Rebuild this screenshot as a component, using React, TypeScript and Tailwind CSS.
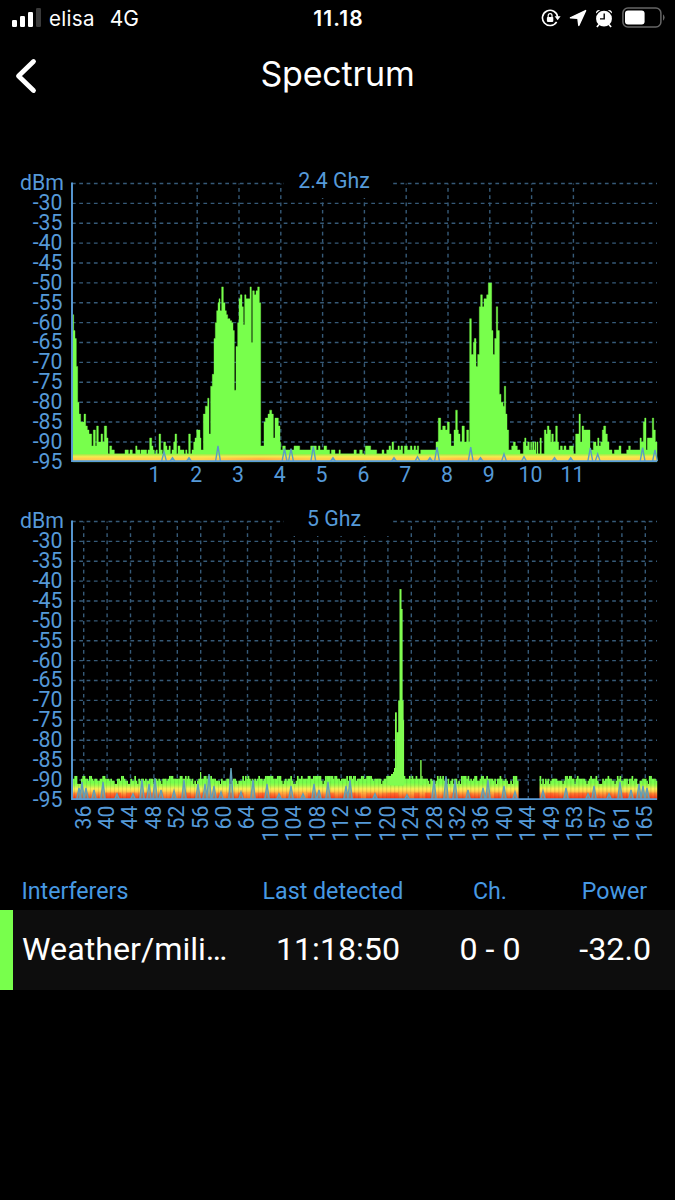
import React from 'react';

type Point = [number, number];

// Points are [offset, dBm]; offsets count thirds of a pixel from `at`
interface Segment {
    at: number;
    points: Point[];
}

interface Spike {
    x: number;
    dbm: number;
}

const PLOT_LEFT = 72;
const PLOT_RIGHT = 657;
const PLOT_TOP = 23.5;
const STEP = 19.88;
const PLOT_BOTTOM = PLOT_TOP + STEP * 14;

const LEVELS = [-30, -35, -40, -45, -50, -55, -60, -65, -70, -75, -80, -85, -90, -95];

const CHANNELS_24 = ['1', '2', '3', '4', '5', '6', '7', '8', '9', '10', '11'];
const CHANNELS_5 = [
    '36', '40', '44', '48', '52', '56', '60', '64', '100', '104', '108', '112', '116',
    '120', '124', '128', '132', '136', '140', '144', '149', '153', '157', '161', '165',
];

const SWEEP_24: Segment[] = [
    {
        at: 0,
        points: [
            [218, -58], [221, -62], [225, -64], [229, -71], [233, -80], [237, -83], [242, -85], [252, -83], [257, -86],
            [262, -87], [267, -88], [275, -91], [280, -87], [286, -91], [290, -86], [295, -90], [303, -88], [308, -90],
            [313, -86], [320, -89], [324, -93], [329, -91], [335, -92], [343, -93], [375, -92], [385, -93], [390, -92],
            [397, -93], [407, -91], [411, -92], [420, -93], [423, -92], [440, -93], [444, -92], [449, -89], [455, -91],
            [459, -92], [463, -93], [468, -92], [472, -93], [477, -88], [482, -92], [487, -93], [491, -90], [497, -91],
            [501, -92], [507, -91], [511, -93], [516, -92], [521, -90], [525, -88], [530, -93], [534, -91], [540, -92],
            [552, -93], [557, -92], [561, -93], [566, -88], [571, -93], [576, -92], [581, -90], [585, -89], [590, -87],
            [600, -89], [603, -92],
        ],
    },
    {
        at: 190,
        points: [
            [40, -83], [46, -81], [53, -79], [57, -88], [62, -76], [67, -73], [72, -64], [76, -60], [80, -57], [84, -55],
            [87, -54], [90, -57], [95, -51], [100, -55], [105, -57], [109, -58], [113, -59], [120, -59.5], [125, -60],
            [129, -62], [133, -77], [138, -66], [143, -60], [147, -54], [151, -53], [156, -56], [160, -60.5], [164, -53],
            [168, -54], [180, -51], [184, -65], [188, -52], [193, -53], [198, -52], [203, -51], [208, -55], [212, -91],
            [222, -85], [226, -84], [234, -83], [239, -82], [245, -83], [250, -89], [255, -84], [265, -86], [270, -90],
        ],
    },
    {
        at: 274,
        points: [
            [20, -92], [26, -91], [34, -92], [60, -91], [77, -92], [110, -91], [127, -92], [133, -91], [138, -92],
            [150, -91], [158, -92], [167, -93], [172, -92], [183, -93], [195, -92], [199, -93], [240, -92], [247, -93],
            [257, -92], [265, -93], [270, -95], [274, -91], [290, -92], [308, -93], [324, -92], [330, -93], [338, -92],
            [345, -91], [350, -92], [354, -90], [359, -92], [372, -91], [376, -92], [381, -91], [386, -93], [391, -91],
            [400, -92], [409, -91], [414, -92], [420, -91], [425, -92], [430, -91], [434, -93], [440, -92],
        ],
    },
    {
        at: 430,
        points: [
            [0, -92], [18, -90], [25, -84], [32, -87], [38, -86], [46, -87], [52, -85], [58, -88], [63, -91], [72, -87],
            [77, -82], [82, -87], [85, -88], [90, -90], [96, -86], [103, -90], [110, -87], [116, -90], [119, -59],
            [124, -68], [130, -65], [133, -64], [138, -71], [143, -68], [148, -56], [152, -53], [157, -56], [162, -54],
            [170, -53], [175, -50], [185, -62], [189, -68], [194, -64], [199, -56], [203, -62], [208, -78], [213, -80],
            [219, -81], [223, -76], [227, -83], [231, -87], [236, -92], [245, -91], [250, -90], [256, -91], [262, -92],
            [270, -93], [280, -90], [284, -89], [288, -91], [293, -90], [298, -92], [302, -90], [305, -92], [308, -90],
            [312, -92], [315, -90], [318, -93], [321, -90], [324, -93], [330, -89], [334, -93], [343, -87], [348, -88],
            [352, -86], [357, -87], [362, -90], [365, -88], [370, -90], [377, -86], [382, -90], [386, -92], [391, -91],
            [397, -92], [402, -91], [408, -92], [418, -91], [430, -93], [437, -88], [447, -83], [451, -90], [456, -86],
            [461, -87], [480, -92], [484, -92], [490, -90], [498, -91], [503, -89], [507, -91], [512, -90], [517, -87],
            [521, -86], [527, -88], [532, -90], [537, -92], [546, -93], [553, -92], [567, -91], [573, -93], [590, -92],
            [596, -91], [601, -92], [630, -89], [634, -90], [640, -85], [644, -84], [648, -92], [652, -89], [667, -84],
            [671, -87], [676, -90], [681, -95],
        ],
    },
];

const SPIKES_24: Spike[] = [
    { x: 164, dbm: -92.5 }, { x: 172.5, dbm: -94 }, { x: 189, dbm: -94 }, { x: 218, dbm: -91 }, { x: 284.5, dbm: -91.7 },
    { x: 291, dbm: -91.7 }, { x: 313.3, dbm: -91.2 }, { x: 333, dbm: -94 }, { x: 394, dbm: -94 }, { x: 417.5, dbm: -93.7 },
    { x: 430, dbm: -94 }, { x: 437, dbm: -91.3 }, { x: 470.7, dbm: -91.3 }, { x: 480.5, dbm: -94 }, { x: 504, dbm: -93 },
    { x: 524, dbm: -93.7 }, { x: 554.5, dbm: -94 }, { x: 570.7, dbm: -94 }, { x: 590.3, dbm: -91.5 }, { x: 597.7, dbm: -93 },
    { x: 642.6, dbm: -91.4 }, { x: 655, dbm: -92 },
];

const SPIKES_5: Spike[] = [
    { x: 79, dbm: -92 }, { x: 82, dbm: -90.5 }, { x: 86, dbm: -92 }, { x: 94, dbm: -92.5 }, { x: 103, dbm: -90.5 },
    { x: 117, dbm: -93.5 }, { x: 133, dbm: -93.5 }, { x: 142, dbm: -90 }, { x: 149, dbm: -91 }, { x: 155, dbm: -89.5 },
    { x: 161, dbm: -92.5 }, { x: 174, dbm: -92.7 }, { x: 184, dbm: -90 }, { x: 198, dbm: -91 }, { x: 205, dbm: -91 },
    { x: 209, dbm: -88.5 }, { x: 214, dbm: -91.5 }, { x: 221, dbm: -93 }, { x: 231, dbm: -87 }, { x: 241, dbm: -93 },
    { x: 253, dbm: -90 }, { x: 267, dbm: -91 }, { x: 279, dbm: -93.5 }, { x: 291, dbm: -91.5 }, { x: 303, dbm: -93.5 },
    { x: 314, dbm: -91 }, { x: 319, dbm: -92.5 }, { x: 328, dbm: -90.5 }, { x: 346, dbm: -91.5 }, { x: 350, dbm: -90 },
    { x: 375, dbm: -93.5 }, { x: 407, dbm: -93.7 }, { x: 434, dbm: -90 }, { x: 446, dbm: -89 }, { x: 455, dbm: -90 },
    { x: 468, dbm: -92.5 }, { x: 483, dbm: -92 }, { x: 488, dbm: -90 }, { x: 504, dbm: -91.5 }, { x: 515, dbm: -93 },
    { x: 543, dbm: -92.7 }, { x: 566, dbm: -92 }, { x: 588, dbm: -93.5 }, { x: 594, dbm: -91.5 }, { x: 609, dbm: -93.5 },
    { x: 620, dbm: -90.5 }, { x: 631, dbm: -92.5 }, { x: 639, dbm: -91 }, { x: 643, dbm: -91.5 }, { x: 647, dbm: -92 },
];

// Burst around channel 122, lower steps run on underneath the higher ones
const PEAK_5 = [
    { x: 388, w: 15, dbm: -89 }, { x: 391, w: 12, dbm: -88.5 }, { x: 393, w: 10, dbm: -88 }, { x: 394, w: 9, dbm: -87 },
    { x: 395, w: 1.8, dbm: -73 }, { x: 396.3, w: 7.4, dbm: -78 }, { x: 398.2, w: 5.4, dbm: -70 },
    { x: 399.5, w: 2, dbm: -42 }, { x: 400.8, w: 1.8, dbm: -47 }, { x: 402, w: 2.1, dbm: -75 },
    { x: 420.2, w: 1.4, dbm: -85 }, { x: 421.4, w: 1.2, dbm: -89 }, { x: 200, w: 1.2, dbm: -88 },
];

const yOf = (dbm: number) => PLOT_TOP + ((-25 - dbm) / 5) * STEP;

// Small repeatable noise source for the waterfall columns
const noise = (n: number) => {
    const v = Math.sin(n * 12.9898) * 43758.5453;
    return v - Math.floor(v);
};

const sweepPath = (segments: Segment[]) => {
    let d = `M${PLOT_LEFT + 1} ${PLOT_BOTTOM}`;
    segments.forEach(({ at, points }) => {
        points.forEach(([x, dbm]) => {
            d += `H${(at + x / 3).toFixed(2)}V${yOf(dbm).toFixed(2)}`;
        });
    });
    return `${d}V${PLOT_BOTTOM}Z`;
};

const spikesPath = (spikes: Spike[], width: number) => {
    const base = PLOT_BOTTOM - 0.7;
    return spikes.map(({ x, dbm }) => `M${x - width} ${base}L${x} ${yOf(dbm).toFixed(1)}L${x + width} ${base}`).join('');
};

interface ChartProps {
    title: string;
    channels: string[];
    firstX: number;
    spacing: number;
    height: number;
    rotateLabels?: boolean;
    children: React.ReactNode;
}

const Chart: React.FC<ChartProps> = ({ title, channels, firstX, spacing, height, rotateLabels, children }) => (
    <svg width="675" height={height} viewBox={`0 0 675 ${height}`} className="block shrink-0 font-[Roboto,sans-serif]">
        <g stroke="#365a78" strokeWidth="1.4" strokeDasharray="3.7 3.6" fill="none">
            {[-25, ...LEVELS.slice(0, -1)].map(level => (
                <line key={level} x1={PLOT_LEFT} x2={PLOT_RIGHT} y1={yOf(level)} y2={yOf(level)} />
            ))}
            {channels.map((channel, i) => (
                <line key={channel} x1={firstX + i * spacing} x2={firstX + i * spacing} y1={PLOT_BOTTOM} y2={PLOT_TOP} />
            ))}
        </g>
        <rect x="284" y="8" width="107" height="30" fill="#000" />
        <text x="334" y="28.4" fontSize="21.3" textAnchor="middle" fill="#5599d8">{title}</text>

        {children}

        <path d={`M${PLOT_LEFT} ${PLOT_TOP - 1}V${PLOT_BOTTOM - 0.7}H${PLOT_RIGHT}`} stroke="#5a9cd8" strokeWidth="1.9" fill="none" />

        <g fontSize="21.3" fill="#5599d8">
            <text x="64" y="30" textAnchor="end">dBm</text>
            {LEVELS.map((level, i) => (
                <text key={level} x="62.5" y={50.4 + i * 19.86} textAnchor="end">{level}</text>
            ))}
            {channels.map((channel, i) => {
                const x = firstX + i * spacing;
                return rotateLabels ? (
                    <text key={channel} transform={`translate(${x + 6.8} 307.5) rotate(-90)`} textAnchor="end">{channel}</text>
                ) : (
                    <text key={channel} x={x - 1} y="321.6" textAnchor="middle">{channel}</text>
                );
            })}
        </g>
    </svg>
);

const Chart24 = () => (
    <Chart title="2.4 Ghz" channels={CHANNELS_24} firstX={155.4} spacing={41.8} height={338}>
        <defs>
            <linearGradient id="floor24" x1="0" x2="1" y1="0" y2="0">
                <stop offset="0" stopColor="#ffc44c" />
                <stop offset="0.22" stopColor="#ffcf4a" />
                <stop offset="0.32" stopColor="#ff9f3c" />
                <stop offset="0.42" stopColor="#ffc94a" />
                <stop offset="0.6" stopColor="#ffd24a" />
                <stop offset="0.66" stopColor="#ffb344" />
                <stop offset="0.85" stopColor="#ffdc4e" />
                <stop offset="1" stopColor="#ffcf4a" />
            </linearGradient>
            <linearGradient id="fade24" x1="0" x2="0" y1="0" y2="1">
                <stop offset="0" stopColor="#a8f04a" />
                <stop offset="0.3" stopColor="#f6ee50" stopOpacity="0.9" />
                <stop offset="0.65" stopColor="#ffe14e" stopOpacity="0.15" />
                <stop offset="1" stopColor="#fff27a" stopOpacity="0.75" />
            </linearGradient>
        </defs>
        <path d={sweepPath(SWEEP_24)} fill="#78ff4c" stroke="#78ff4c" strokeWidth="0.4" />
        <rect x="73" y={yOf(-93.2)} width="584" height="7" fill="url(#floor24)" />
        <rect x="73" y={yOf(-93.2)} width="584" height="7" fill="url(#fade24)" />
        <path d={spikesPath(SPIKES_24, 2.4)} stroke="#5a9cc4" strokeWidth="1.4" fill="none" />
    </Chart>
);

const Chart5 = () => {
    const columns = Array.from({ length: 438 }, (_, i) => ({ i, x: 73 + i * 1.333 })).filter(
        ({ x }) => x < 517 || x > 539.5
    );
    return (
        <Chart title="5 Ghz" channels={CHANNELS_5} firstX={83.7} spacing={23.4} height={346} rotateLabels>
            <defs>
                <linearGradient id="heat" gradientUnits="userSpaceOnUse" x1="0" x2="0" y1={yOf(-90.7)} y2={PLOT_BOTTOM}>
                    <stop offset="0" stopColor="#78ff4c" />
                    <stop offset="0.15" stopColor="#9dfb4b" />
                    <stop offset="0.36" stopColor="#fbf057" />
                    <stop offset="0.5" stopColor="#ffcf49" />
                    <stop offset="0.66" stopColor="#ff8a36" />
                    <stop offset="0.88" stopColor="#f24a22" />
                </linearGradient>
            </defs>
            {columns.map(({ i, x }) => {
                // neighbouring columns share part of their level so the edge comes out in clumps
                const level = noise(Math.floor(i / 3)) * 0.6 + noise(i + 90) * 0.5;
                const top = level > 0.86 ? -91 : level > 0.66 ? -90.2 : level > 0.4 ? -89.7 : -89;
                return <rect key={i} x={x} y={yOf(top)} width="1.7" height={PLOT_BOTTOM - yOf(top)} fill="url(#heat)" />;
            })}
            {columns.map(({ i, x }) => {
                const v = noise(Math.floor(i / 4) + 500);
                return (
                    <rect
                        key={i}
                        x={x}
                        y={yOf(-93.2)}
                        width="1.4"
                        height="7"
                        fill={v > 0.4 ? '#ff3018' : '#ffc94a'}
                        opacity={v > 0.4 ? (v - 0.4) * 0.7 : (0.4 - v) * 0.8}
                    />
                );
            })}
            {PEAK_5.map(({ x, w, dbm }) => (
                <rect key={x} x={x} y={yOf(dbm)} width={w} height={yOf(-91.3) - yOf(dbm)} fill="#80fd50" />
            ))}
            <path d={spikesPath(SPIKES_5, 2.2)} stroke="#5f9fb8" strokeWidth="1.4" fill="#6b9c9c" fillOpacity="0.5" />
        </Chart>
    );
};

const StatusBar = () => (
    <div className="flex h-9 items-center justify-between pl-3 pr-2.5 font-[Inter,sans-serif] text-white">
        <div className="flex w-[300px] items-center">
            <svg width="30" height="20" viewBox="0 0 30 20">
                <rect x="0" y="12" width="5" height="7" rx="1.2" fill="#fff" />
                <rect x="8" y="8" width="5" height="11" rx="1.2" fill="#fff" />
                <rect x="16" y="4" width="5" height="15" rx="1.2" fill="#fff" />
                <rect x="24" y="0" width="5" height="19" rx="1.2" fill="#3a3a3a" />
            </svg>
            <span className="ml-[7px] pt-0.5 text-[20.5px] tracking-[0.3px]">elisa</span>
            <span className="ml-[15px] pt-0.5 text-[21px]">4G</span>
        </div>
        <span className="pt-0.5 text-[21px] font-semibold tracking-[1.1px]">11.18</span>
        <div className="flex w-[300px] items-center justify-end">
            <svg width="20" height="20" viewBox="0 0 20 20" fill="none">
                <path d="M15.6 13.8A7.6 7.6 0 1 1 16.6 9" stroke="#fff" strokeWidth="1.6" />
                <path d="M13.6 8.3h6l-3 4z" fill="#fff" />
                <rect x="5.9" y="9" width="6.4" height="4.9" rx="0.8" fill="#fff" />
                <path d="M7.2 9.2V7.5a1.9 1.9 0 0 1 3.8 0v1.7" stroke="#fff" strokeWidth="1.2" />
            </svg>
            <svg width="18" height="18" viewBox="0 0 18 18" className="ml-2">
                <path
                    d="M16.6 1.6 9.8 16.4 8.9 9.4 1.4 8.8z"
                    fill="#fff"
                    stroke="#fff"
                    strokeWidth="1.4"
                    strokeLinejoin="round"
                />
            </svg>
            <svg width="18" height="19" viewBox="0 0 18 19" className="ml-2">
                <circle cx="9" cy="9.7" r="7.9" fill="#fff" />
                <path d="M1 4.6C.6 2.2 2.5.6 5.2 1.1zM17 4.6C17.4 2.2 15.5.6 12.8 1.1z" fill="#fff" />
                <path d="M4 15.5 1.9 18M14 15.5l2.1 2.5" stroke="#fff" strokeWidth="1.7" />
                <path d="M9.2 4.5v5.4H5" stroke="#000" strokeWidth="1.4" fill="none" />
            </svg>
            <svg width="43" height="22" viewBox="0 0 43 22" className="ml-[9px]">
                <rect x="0.9" y="1" width="38" height="19" rx="5" fill="none" stroke="#666" strokeWidth="1.5" />
                <rect x="3" y="3.5" width="19.6" height="14" rx="3" fill="#fff" />
                <path d="M41 7.3a4 4 0 0 1 0 6.4z" fill="#666" />
            </svg>
        </div>
    </div>
);

const App: React.FC = () => {
    return (
        <div className="flex h-[1200px] w-[675px] flex-col overflow-hidden bg-black font-[Roboto,sans-serif]">
            <StatusBar />

            <div className="grid h-[124px] grid-cols-[100px_1fr_100px] items-start pt-[17px]">
                <svg width="24" height="40" viewBox="0 0 24 40" className="ml-[14px] mt-[3px]">
                    <path d="M19.5 5.5 4.5 20l15 14.5" fill="none" stroke="#fff" strokeWidth="4.8" strokeLinecap="round" strokeLinejoin="round" />
                </svg>
                <h1 className="text-center font-[Inter,sans-serif] text-[34px] leading-[42px] tracking-[-0.2px] text-white">Spectrum</h1>
            </div>

            <Chart24 />
            <Chart5 />

            <div className="mt-[30px] grid h-9 grid-cols-[240px_186px_128px_121px] items-center text-[23.2px] leading-none text-[#4799e3]">
                <span className="pl-[21.5px]">Interferers</span>
                <span className="text-center">Last detected</span>
                <span className="text-center">Ch.</span>
                <span className="text-center">Power</span>
            </div>

            <div className="grid h-20 grid-cols-[13px_227px_196px_108px_131px] items-center bg-[#0d0d0d] text-[32.2px] text-white">
                <span className="h-full bg-[#78ff4c]" />
                <span className="pb-px pl-[9px]">Weather/mili…</span>
                <span className="pb-px text-center">11:18:50</span>
                <span className="pb-px text-center">0 - 0</span>
                <span className="pb-px pr-6 text-right">-32.0</span>
            </div>
        </div>
    );
};

export default App;
